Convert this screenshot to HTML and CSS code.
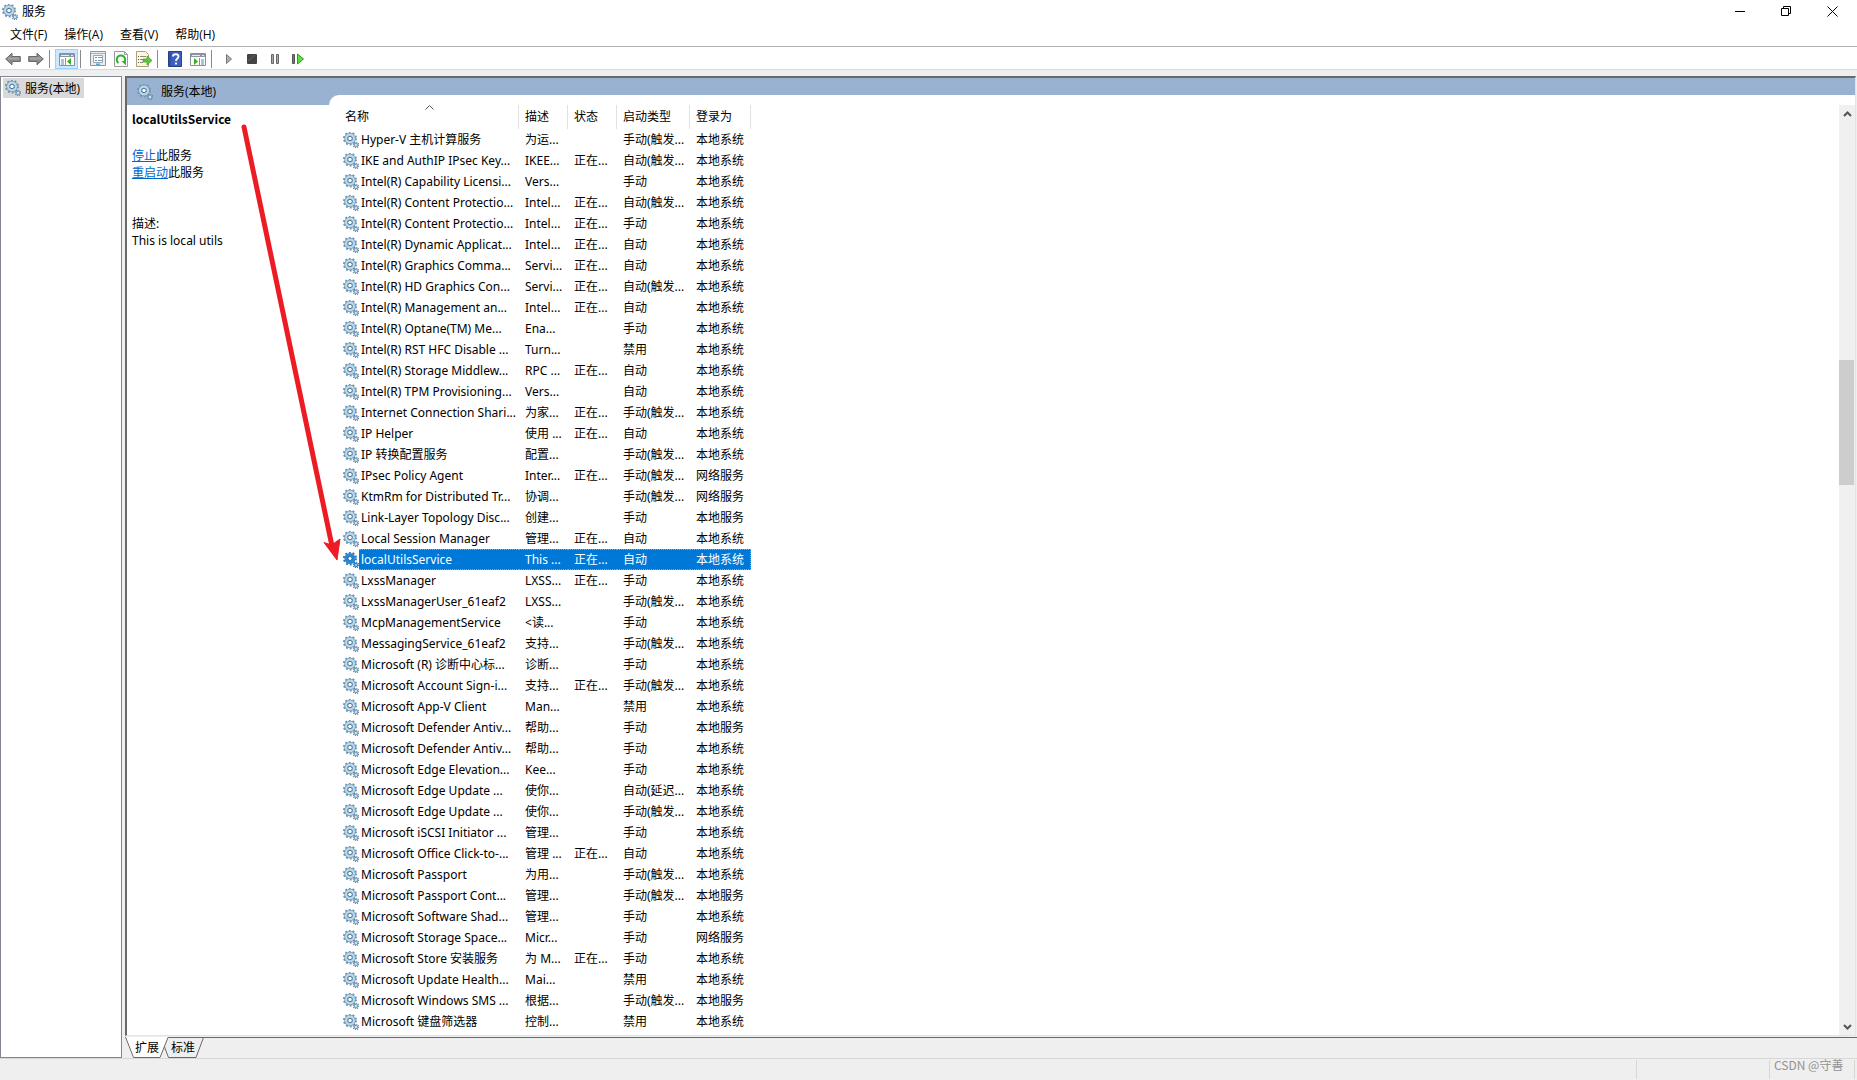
FILE: index.html
```html
<!DOCTYPE html>
<html lang="zh-CN">
<head>
<meta charset="utf-8">
<title>服务</title>
<link rel="stylesheet" href="styles.css">
</head>
<body>
<svg class="defs" aria-hidden="true">
  <symbol id="gear" viewBox="0 0 16 16">
    <circle cx="7" cy="6.5" r="6" fill="none" stroke="#6f93ae" stroke-width="2" stroke-dasharray="1.885 1.885"/>
    <circle cx="7" cy="6.5" r="4" fill="none" stroke="#6f97b6" stroke-width="3.4"/>
    <circle cx="7" cy="6.5" r="3.9" fill="none" stroke="#b9d9ec" stroke-width="2.2"/>
    <circle cx="7" cy="6.5" r="2.2" fill="#fff" stroke="#57768f" stroke-width="1"/>
    <circle cx="13" cy="13" r="2.600" fill="none" stroke="#6784a0" stroke-width="1.4" stroke-dasharray="1.02 1.02"/>
    <circle cx="13" cy="13" r="1.6" fill="#e8f3fa" stroke="#7ea3c0" stroke-width="1.2"/>
  </symbol>
  <symbol id="gear-selected" viewBox="0 0 16 16">
    <circle cx="7" cy="6.5" r="6" fill="none" stroke="#1c74c0" stroke-width="2" stroke-dasharray="1.885 1.885"/>
    <circle cx="7" cy="6.5" r="3.8" fill="none" stroke="#2f86d0" stroke-width="3.400"/>
    <circle cx="7" cy="6.5" r="2" fill="#fff" stroke="#0c5fae" stroke-width=".9"/>
    <circle cx="13" cy="13" r="2.600" fill="none" stroke="#1c74c0" stroke-width="1.4" stroke-dasharray="1.02 1.02"/>
    <circle cx="13" cy="13" r="1.6" fill="#a8d0f0" stroke="#2f86d0" stroke-width="1.2"/>
  </symbol>
</svg>
<div class="window">
  <header class="titlebar">
    <svg class="icon"><use href="#gear"/></svg>
    <h1 class="title">服务</h1>
    <div class="controls">
      <button class="control" aria-label="最小化"><svg width="11" height="11"><path d="M0 5.5h10" stroke="#000"/></svg></button>
      <button class="control" aria-label="还原"><svg width="11" height="11"><path d="M.5 2.500h7v7h-7zM2.500 2.500v-2h7v7h-2" fill="none" stroke="#000"/></svg></button>
      <button class="control" aria-label="关闭"><svg width="11" height="11"><path d="M.5.5l10 10M10.500.5l-10 10" stroke="#000"/></svg></button>
    </div>
  </header>
  <nav class="menubar">
    <button class="menu">文件(F)</button>
    <button class="menu">操作(A)</button>
    <button class="menu">查看(V)</button>
    <button class="menu">帮助(H)</button>
  </nav>
  <div class="toolbar">
    <button class="tool" aria-label="后退"><svg class="icon"><path d="M.7 8L7 2.200v3.300h8.300v5H7v3.300z" fill="#8b8b8b" stroke="#6a6a6a"/><path d="M3 7.500h11" stroke="#a5a5a5" stroke-width="2"/></svg></button>
    <button class="tool" aria-label="前进"><svg class="icon"><path d="M15.300 8L9 2.200v3.300H.7v5H9v3.300z" fill="#8b8b8b" stroke="#6a6a6a"/><path d="M2 7.500h11" stroke="#a5a5a5" stroke-width="2"/></svg></button>
    <span class="separator"></span>
    <button class="tool tool-on" aria-label="显示/隐藏控制台树"><svg class="icon"><path d="M.5 2.500h15v12H.5z" fill="#fff" stroke="#87909c"/><path d="M1 3h14v3H1z" fill="#8d96a3"/><path d="M2 4.500h8M12 4.500h2" stroke="#e8edf2"/><path d="M2 9h3M2 11h3M2 13h3" stroke="#5f86b5"/><path d="M6.500 7v7" stroke="#87909c"/><path d="M12 7v7L8 10.500z" fill="#3cae1e"/></svg></button>
    <span class="separator"></span>
    <button class="tool" aria-label="属性"><svg class="icon"><path d="M.5.5h15v14H.5z" fill="#e9edf0" stroke="#8e979f"/><path d="M1 2.500h14" stroke="#a9b2ba"/><path d="M3.500 4.500h9v7h-9z" fill="#fff" stroke="#9aa7b4"/><path d="M5 6.500h2M5 9.500h2" stroke="#4b9ccb"/><path d="M8 6.500h4M8 9.500h4" stroke="#8e979f"/><path d="M6 13.500h4" stroke="#57a9dc" stroke-width="2"/></svg></button>
    <button class="tool" aria-label="刷新"><svg class="icon"><path d="M1.500.5h10l3 3v12h-13z" fill="#fafafa" stroke="#9b9b9b"/><path d="M11.500.5v3h3" fill="none" stroke="#9b9b9b"/><path d="M5.500 12A4.200 4.200 0 1 1 11 11.500" fill="none" stroke="#2fb12f" stroke-width="2"/><path d="M8.500 10h4.500v4.500z" fill="#2fb12f"/></svg></button>
    <button class="tool" aria-label="导出列表"><svg class="icon"><path d="M.5.5h9l3 3v12H.5z" fill="#fdf8dc" stroke="#aaa07c"/><path d="M2 5.500h1M2 8.500h1M2 11.500h1" stroke="#555"/><path d="M4 5.500h6M4 8.500h3M4 11.500h3" stroke="#8a8a8a"/><path d="M7 8h4V5l5 4.500-5 4.500v-3H7z" fill="#5bc739" stroke="#3da323" stroke-width=".7"/></svg></button>
    <span class="separator"></span>
    <button class="tool" aria-label="帮助"><svg class="icon"><path d="M1.500.5h13v15h-13z" fill="#3d5fc0" stroke="#26408c"/><path d="M3 1v14" stroke="#26408c"/><path d="M6 5.500C6 2.500 11.500 2.500 11.500 5.500 11.500 7.500 9 7.500 9 10M9 11.500v2" fill="none" stroke="#fff" stroke-width="1.800"/></svg></button>
    <button class="tool" aria-label="显示/隐藏操作窗格"><svg class="icon"><path d="M.5 2.500h15v12H.5z" fill="#fff" stroke="#87909c"/><path d="M1 3h14v3H1z" fill="#8d96a3"/><path d="M2 4.500h8M12 4.500h2" stroke="#e8edf2"/><path d="M11 9h3M11 11h3M11 13h3" stroke="#5f86b5"/><path d="M9.500 7v7" stroke="#87909c"/><path d="M4 7v7l4-3.500z" fill="#3cae1e"/></svg></button>
    <span class="separator"></span>
    <button class="tool" aria-label="启动服务"><svg class="icon"><path d="M5.500 3.500v9l5-4.500z" fill="#b0b0b0" stroke="#777"/></svg></button>
    <button class="tool" aria-label="停止服务"><svg class="icon"><rect x="3" y="3" width="10" height="10" rx="1" fill="#444"/><path d="M4 10L11 4" stroke="#666"/></svg></button>
    <button class="tool" aria-label="暂停服务"><svg class="icon"><path d="M4.500 3.500h2v9h-2zM9.500 3.500h2v9h-2z" fill="#aaa" stroke="#666"/></svg></button>
    <button class="tool" aria-label="重启动服务"><svg class="icon"><path d="M2.500 3.500h2v9h-2z" fill="#777" stroke="#555"/><path d="M7.500 3v10l6-5z" fill="#5fe03a" stroke="#2f9a1c"/></svg></button>
  </div>
  <main class="workspace">
    <aside class="tree">
      <a class="tree-item" href="#services"><svg class="icon"><use href="#gear"/></svg>服务(本地)</a>
    </aside>
    <div class="content">
      <section class="pane" id="services">
        <h2 class="pane-title"><svg class="icon"><use href="#gear"/></svg>服务(本地)</h2>
        <div class="pane-body">
          <div class="details">
            <h3 class="service-name">localUtilsService</h3>
            <p><a class="action" href="#stop">停止</a>此服务</p>
            <p><a class="action" href="#restart">重启动</a>此服务</p>
            <p class="description">描述:<br>This is local utils</p>
          </div>
          <div class="list">
            <div class="list-view">
            <table class="services">
              <colgroup><col class="c-icon"><col class="c-name"><col class="c-narrow"><col class="c-narrow"><col class="c-start"><col class="c-login"></colgroup>
              <thead><tr><th colspan="2" class="sorted">名称<svg class="sort" width="9" height="5"><path d="M.5 4.500l4-4 4 4" fill="none" stroke="#555"/></svg></th><th>描述</th><th>状态</th><th>启动类型</th><th>登录为</th></tr></thead>
              <tbody>
              <tr><td><svg class="icon"><use href="#gear"/></svg></td><td>Hyper-V 主机计算服务</td><td>为运...</td><td></td><td>手动(触发...</td><td>本地系统</td></tr>
              <tr><td><svg class="icon"><use href="#gear"/></svg></td><td>IKE and AuthIP IPsec Key...</td><td>IKEE...</td><td>正在...</td><td>自动(触发...</td><td>本地系统</td></tr>
              <tr><td><svg class="icon"><use href="#gear"/></svg></td><td>Intel(R) Capability Licensi...</td><td>Vers...</td><td></td><td>手动</td><td>本地系统</td></tr>
              <tr><td><svg class="icon"><use href="#gear"/></svg></td><td>Intel(R) Content Protectio...</td><td>Intel...</td><td>正在...</td><td>自动(触发...</td><td>本地系统</td></tr>
              <tr><td><svg class="icon"><use href="#gear"/></svg></td><td>Intel(R) Content Protectio...</td><td>Intel...</td><td>正在...</td><td>手动</td><td>本地系统</td></tr>
              <tr><td><svg class="icon"><use href="#gear"/></svg></td><td>Intel(R) Dynamic Applicat...</td><td>Intel...</td><td>正在...</td><td>自动</td><td>本地系统</td></tr>
              <tr><td><svg class="icon"><use href="#gear"/></svg></td><td>Intel(R) Graphics Comma...</td><td>Servi...</td><td>正在...</td><td>自动</td><td>本地系统</td></tr>
              <tr><td><svg class="icon"><use href="#gear"/></svg></td><td>Intel(R) HD Graphics Con...</td><td>Servi...</td><td>正在...</td><td>自动(触发...</td><td>本地系统</td></tr>
              <tr><td><svg class="icon"><use href="#gear"/></svg></td><td>Intel(R) Management an...</td><td>Intel...</td><td>正在...</td><td>自动</td><td>本地系统</td></tr>
              <tr><td><svg class="icon"><use href="#gear"/></svg></td><td>Intel(R) Optane(TM) Me...</td><td>Ena...</td><td></td><td>手动</td><td>本地系统</td></tr>
              <tr><td><svg class="icon"><use href="#gear"/></svg></td><td>Intel(R) RST HFC Disable ...</td><td>Turn...</td><td></td><td>禁用</td><td>本地系统</td></tr>
              <tr><td><svg class="icon"><use href="#gear"/></svg></td><td>Intel(R) Storage Middlew...</td><td>RPC ...</td><td>正在...</td><td>自动</td><td>本地系统</td></tr>
              <tr><td><svg class="icon"><use href="#gear"/></svg></td><td>Intel(R) TPM Provisioning...</td><td>Vers...</td><td></td><td>自动</td><td>本地系统</td></tr>
              <tr><td><svg class="icon"><use href="#gear"/></svg></td><td>Internet Connection Shari...</td><td>为家...</td><td>正在...</td><td>手动(触发...</td><td>本地系统</td></tr>
              <tr><td><svg class="icon"><use href="#gear"/></svg></td><td>IP Helper</td><td>使用 ...</td><td>正在...</td><td>自动</td><td>本地系统</td></tr>
              <tr><td><svg class="icon"><use href="#gear"/></svg></td><td>IP 转换配置服务</td><td>配置...</td><td></td><td>手动(触发...</td><td>本地系统</td></tr>
              <tr><td><svg class="icon"><use href="#gear"/></svg></td><td>IPsec Policy Agent</td><td>Inter...</td><td>正在...</td><td>手动(触发...</td><td>网络服务</td></tr>
              <tr><td><svg class="icon"><use href="#gear"/></svg></td><td>KtmRm for Distributed Tr...</td><td>协调...</td><td></td><td>手动(触发...</td><td>网络服务</td></tr>
              <tr><td><svg class="icon"><use href="#gear"/></svg></td><td>Link-Layer Topology Disc...</td><td>创建...</td><td></td><td>手动</td><td>本地服务</td></tr>
              <tr><td><svg class="icon"><use href="#gear"/></svg></td><td>Local Session Manager</td><td>管理...</td><td>正在...</td><td>自动</td><td>本地系统</td></tr>
              <tr class="selected"><td><svg class="icon"><use href="#gear-selected"/></svg></td><td>localUtilsService</td><td>This ...</td><td>正在...</td><td>自动</td><td>本地系统</td></tr>
              <tr><td><svg class="icon"><use href="#gear"/></svg></td><td>LxssManager</td><td>LXSS...</td><td>正在...</td><td>手动</td><td>本地系统</td></tr>
              <tr><td><svg class="icon"><use href="#gear"/></svg></td><td>LxssManagerUser_61eaf2</td><td>LXSS...</td><td></td><td>手动(触发...</td><td>本地系统</td></tr>
              <tr><td><svg class="icon"><use href="#gear"/></svg></td><td>McpManagementService</td><td>&lt;读...</td><td></td><td>手动</td><td>本地系统</td></tr>
              <tr><td><svg class="icon"><use href="#gear"/></svg></td><td>MessagingService_61eaf2</td><td>支持...</td><td></td><td>手动(触发...</td><td>本地系统</td></tr>
              <tr><td><svg class="icon"><use href="#gear"/></svg></td><td>Microsoft (R) 诊断中心标...</td><td>诊断...</td><td></td><td>手动</td><td>本地系统</td></tr>
              <tr><td><svg class="icon"><use href="#gear"/></svg></td><td>Microsoft Account Sign-i...</td><td>支持...</td><td>正在...</td><td>手动(触发...</td><td>本地系统</td></tr>
              <tr><td><svg class="icon"><use href="#gear"/></svg></td><td>Microsoft App-V Client</td><td>Man...</td><td></td><td>禁用</td><td>本地系统</td></tr>
              <tr><td><svg class="icon"><use href="#gear"/></svg></td><td>Microsoft Defender Antiv...</td><td>帮助...</td><td></td><td>手动</td><td>本地服务</td></tr>
              <tr><td><svg class="icon"><use href="#gear"/></svg></td><td>Microsoft Defender Antiv...</td><td>帮助...</td><td></td><td>手动</td><td>本地系统</td></tr>
              <tr><td><svg class="icon"><use href="#gear"/></svg></td><td>Microsoft Edge Elevation...</td><td>Kee...</td><td></td><td>手动</td><td>本地系统</td></tr>
              <tr><td><svg class="icon"><use href="#gear"/></svg></td><td>Microsoft Edge Update ...</td><td>使你...</td><td></td><td>自动(延迟...</td><td>本地系统</td></tr>
              <tr><td><svg class="icon"><use href="#gear"/></svg></td><td>Microsoft Edge Update ...</td><td>使你...</td><td></td><td>手动(触发...</td><td>本地系统</td></tr>
              <tr><td><svg class="icon"><use href="#gear"/></svg></td><td>Microsoft iSCSI Initiator ...</td><td>管理...</td><td></td><td>手动</td><td>本地系统</td></tr>
              <tr><td><svg class="icon"><use href="#gear"/></svg></td><td>Microsoft Office Click-to-...</td><td>管理 ...</td><td>正在...</td><td>自动</td><td>本地系统</td></tr>
              <tr><td><svg class="icon"><use href="#gear"/></svg></td><td>Microsoft Passport</td><td>为用...</td><td></td><td>手动(触发...</td><td>本地系统</td></tr>
              <tr><td><svg class="icon"><use href="#gear"/></svg></td><td>Microsoft Passport Cont...</td><td>管理...</td><td></td><td>手动(触发...</td><td>本地服务</td></tr>
              <tr><td><svg class="icon"><use href="#gear"/></svg></td><td>Microsoft Software Shad...</td><td>管理...</td><td></td><td>手动</td><td>本地系统</td></tr>
              <tr><td><svg class="icon"><use href="#gear"/></svg></td><td>Microsoft Storage Space...</td><td>Micr...</td><td></td><td>手动</td><td>网络服务</td></tr>
              <tr><td><svg class="icon"><use href="#gear"/></svg></td><td>Microsoft Store 安装服务</td><td>为 M...</td><td>正在...</td><td>手动</td><td>本地系统</td></tr>
              <tr><td><svg class="icon"><use href="#gear"/></svg></td><td>Microsoft Update Health...</td><td>Mai...</td><td></td><td>禁用</td><td>本地系统</td></tr>
              <tr><td><svg class="icon"><use href="#gear"/></svg></td><td>Microsoft Windows SMS ...</td><td>根据...</td><td></td><td>手动(触发...</td><td>本地服务</td></tr>
              <tr><td><svg class="icon"><use href="#gear"/></svg></td><td>Microsoft 键盘筛选器</td><td>控制...</td><td></td><td>禁用</td><td>本地系统</td></tr>
              <tr><td><svg class="icon"><use href="#gear"/></svg></td><td></td><td></td><td></td><td></td><td></td></tr>
              </tbody>
            </table>
            </div>
            <div class="scrollbar">
              <button class="scroll-button" aria-label="向上滚动"><svg width="9" height="6"><path d="M1 5l3.500-3.500L8 5" fill="none" stroke="#555" stroke-width="2"/></svg></button>
              <span class="track-above"></span><span class="thumb"></span><span class="track-below"></span>
              <button class="scroll-button" aria-label="向下滚动"><svg width="9" height="6"><path d="M1 1l3.500 3.500L8 1" fill="none" stroke="#555" stroke-width="2"/></svg></button>
            </div>
          </div>
        </div>
      </section>
      <div class="tabs">
        <svg class="tab-shapes" width="80" height="21">
          <path d="M0 0l8 20.500h27L43 0z" fill="#fff"/>
          <path d="M.5 0l8 20.500H35L43 .500H500" fill="none" stroke="#696969"/>
          <path d="M39.500 10l4 10.500H71L78.500.5" fill="none" stroke="#696969"/>
        </svg>
        <button class="tab">扩展</button>
        <button class="tab">标准</button>
      </div>
    </div>
  </main>
  <footer class="statusbar">
    <span class="status-main"></span>
    <span class="status-mid"></span>
    <span class="status-end">CSDN @守善</span>
  </footer>
</div>
<svg class="pointer" width="106" height="442" aria-hidden="true">
  <path d="M4 7L92 426" stroke="#ed1c24" stroke-width="5" stroke-linecap="round"/>
  <path d="M97 440L84 422.500l7.500 2.500 8.500-6z" fill="#ed1c24" stroke="#ed1c24"/>
</svg>
</body>
</html>
```
FILE: styles.css
```css
* { box-sizing: border-box; }

body {
  margin: 0;
  background: #efefef;
  color: #000;
  font: 12px/17px "Noto Sans", "Noto Sans CJK SC", sans-serif;
}

h1, h2, h3, p { margin: 0; font: inherit; }

button {
  border: 0;
  padding: 0;
  background: none;
  color: inherit;
  font: inherit;
}

svg { display: block; }
.defs { position: absolute; width: 0; height: 0; }
.icon { flex: none; width: 16px; height: 16px; }

.window {
  display: flex;
  flex-direction: column;
  height: 100vh;
  overflow: hidden;
}

.titlebar {
  display: flex;
  align-items: center;
  gap: 4px;
  height: 23px;
  padding: 0 2px;
  background: #fff;
}
.controls { display: flex; margin-left: auto; }
.control {
  display: flex;
  align-items: center;
  justify-content: center;
  width: 46px;
  height: 21px;
}

.menubar {
  display: flex;
  gap: 17px;
  height: 24px;
  padding: 0 10px;
  border-bottom: 1px solid #b0b0b0;
  background: #fff;
  font-family: "Open Sans", "Noto Sans CJK SC", sans-serif;
}

.toolbar {
  display: flex;
  align-items: center;
  height: 23px;
  padding: 1px 0 0 1px;
  border-bottom: 1px solid #d9d9d9;
  background: #fff;
}
.tool {
  display: flex;
  align-items: center;
  justify-content: center;
  width: 23px;
  height: 20px;
}
.tool-on { border: 1px solid #99d1ff; background: #cce8ff; }
.separator { width: 1px; height: 18px; margin: 0 5px 0 2px; background: #8a8a8a; }

.workspace {
  display: flex;
  flex: 1;
  gap: 3px;
  min-height: 0;
  padding-top: 6px;
}

.tree {
  width: 122px;
  padding: 1px 2px;
  border: 1px solid #828790;
  background: #fff;
}
.tree-item {
  display: inline-flex;
  align-items: center;
  gap: 4px;
  height: 20px;
  padding: 0 4px 0 2px;
  background: #d9d9d9;
  color: #000;
  font-family: "Open Sans", "Noto Sans CJK SC", sans-serif;
  text-decoration: none;
}

.content {
  display: flex;
  flex: 1;
  flex-direction: column;
  min-width: 0;
}
.pane {
  display: flex;
  flex: 1;
  flex-direction: column;
  min-height: 0;
  margin-right: 1px;
  border: 2px solid #696969;
  border-right: 1px solid #e3e3e3;
  border-bottom: 1px solid #e3e3e3;
  background: #fff;
}
.pane-title {
  display: flex;
  flex: none;
  align-items: center;
  gap: 8px;
  height: 27px;
  padding-left: 10px;
  background: #99b2d1;
  font-family: "Open Sans", "Noto Sans CJK SC", sans-serif;
}
.pane-body { display: flex; flex: 1; min-height: 0; }

.details { width: 202px; padding: 5px; }
.service-name { margin-bottom: 20px; font-family: "Noto Sans CJK SC", sans-serif; font-weight: 700; }
.action { color: #0066cc; }
.description { margin-top: 34px; }

.list {
  display: flex;
  flex: 1;
  min-width: 0;
  margin-top: -10px;
  padding-top: 10px;
  border-top-left-radius: 10px;
  background: #fff;
}
.list-view { flex: 1; min-width: 0; padding-left: 12px; overflow: hidden; }

.services {
  width: 410px;
  border-spacing: 0;
  table-layout: fixed;
  white-space: nowrap;
}
.c-icon { width: 18px; }
.c-name { width: 160px; }
.c-narrow { width: 49px; }
.c-start { width: 73px; }
.c-login { width: 61px; }
.services th {
  height: 24px;
  padding: 0 0 2px 6px;
  border-right: 1px solid #e2e2e2;
  font-weight: 400;
  text-align: left;
}
.services .sorted { position: relative; padding-left: 4px; }
.sort { position: absolute; top: 0; left: 84px; }
.services td { height: 21px; padding: 0 0 0 6px; }
.services td:nth-child(-n+2) { padding-left: 2px; }
.selected td:nth-child(n+2) {
  background: #0078d7;
  color: #fff;
  border: 1px dotted #f0913c;
  border-width: 1px 0;
}
.selected td:last-child { border-right-width: 1px; }

.scrollbar {
  display: flex;
  flex-direction: column;
  width: 16px;
  background: #f0f0f0;
}
.scroll-button {
  display: flex;
  align-items: center;
  justify-content: center;
  height: 17px;
}
.track-above { flex: 238; }
.thumb { flex: 125; margin-right: 1px; background: #cdcdcd; }
.track-below { flex: 533; }

.tabs {
  position: relative;
  display: flex;
  gap: 12px;
  height: 21px;
  margin-top: 1px;
  padding-left: 10px;
  border-top: 1px solid #696969;
}
.tab-shapes { position: absolute; top: -1px; left: 0; }
.tab { position: relative; height: 19px; }

.statusbar {
  display: flex;
  height: 22px;
  padding: 1px 2px 1px 0;
  border-top: 1px solid #d7d7d7;
}
.statusbar span { border-right: 1px solid #d7d7d7; }
.status-main { flex: 1; }
.status-mid { width: 133px; }
.status-end { width: 85px; padding-left: 4px; color: #929292; font-family: "Noto Sans CJK SC", sans-serif; line-height: 10px; }

.pointer { position: absolute; top: 120px; left: 240px; }
```
